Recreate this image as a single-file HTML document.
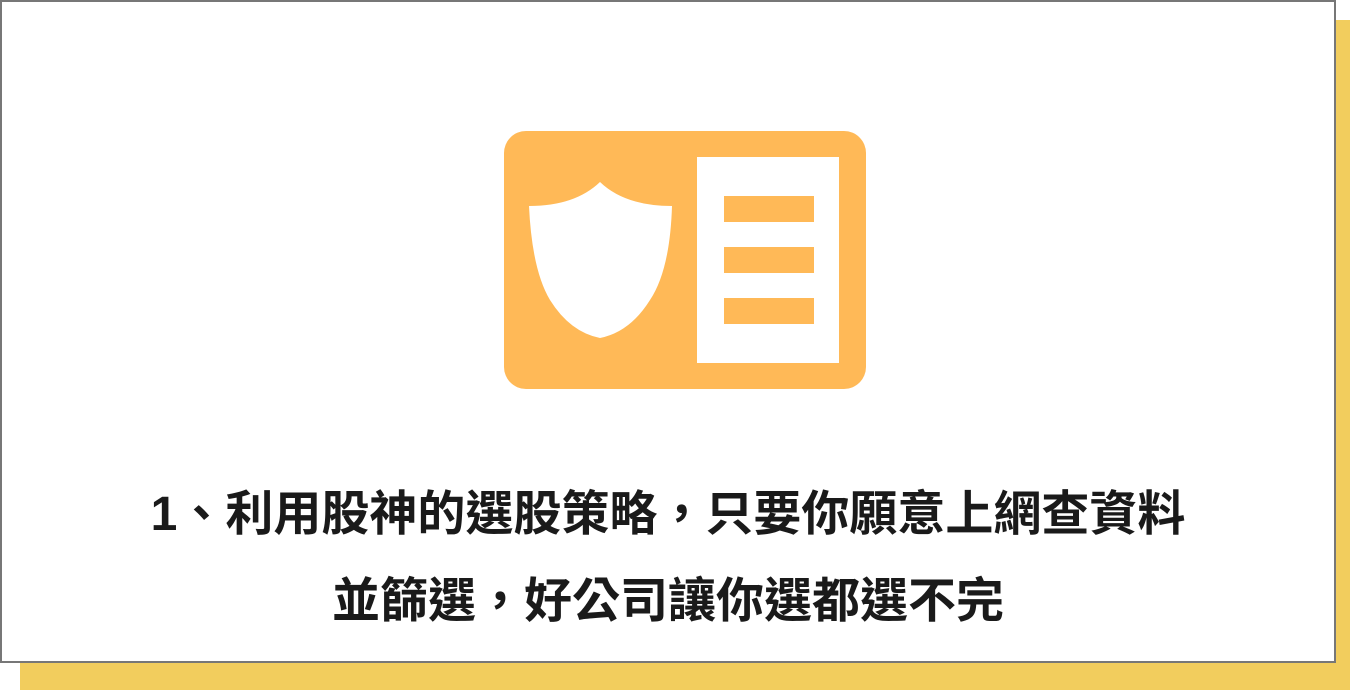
<!DOCTYPE html>
<html><head><meta charset="utf-8"><style>
body{margin:0;width:1350px;height:690px;background:#fff;position:relative;overflow:hidden;font-family:"Liberation Sans","Noto Sans CJK TC",sans-serif}
.sh{position:absolute;left:20px;top:20px;width:1330px;height:670px;background:#F2CD5D}
.bx{position:absolute;left:0;top:0;width:1332px;height:659px;background:#fff;border:2px solid #777}
.t{position:absolute;left:0;width:1336px;text-align:center;font-size:48px;font-weight:bold;color:#1a1a1a;line-height:60px}
</style></head><body>
<div class="sh"></div><div class="bx"></div>
<svg style="position:absolute;left:0;top:0" width="1350" height="690">
<rect x="504" y="131" width="362" height="258" rx="22" fill="#FFB957"/>
<rect x="697" y="157" width="142" height="206" fill="#fff"/>
<rect x="724" y="196" width="90" height="26" fill="#FFB957"/>
<rect x="724" y="247" width="90" height="26" fill="#FFB957"/>
<rect x="724" y="298" width="90" height="26" fill="#FFB957"/>
<path d="M529 206 Q575 206 600 182 Q625 206 672 206 Q670 270 650 300 Q630 332 600 338 Q570 332 550 300 Q532 270 529 206Z" fill="#fff"/>
</svg>
<div class="t" style="top:485px">1、利用股神的選股策略，只要你願意上網查資料</div>
<div class="t" style="top:572px">並篩選，好公司讓你選都選不完</div>
</body></html>
